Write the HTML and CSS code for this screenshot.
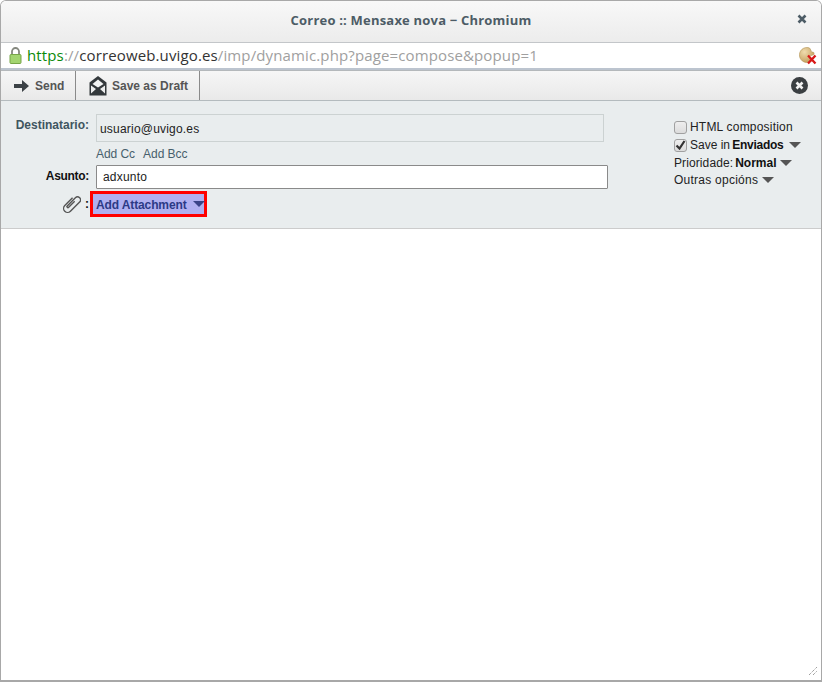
FILE: index.html
```html
<!DOCTYPE html>
<html lang="gl">
<head>
<meta charset="utf-8">
<title>Correo :: Mensaxe nova - Chromium</title>
<link rel="stylesheet" href="styles.css">
</head>
<body>
<div class="window">
  <header class="titlebar">
    <span class="title">Correo :: Mensaxe nova − Chromium</span>
    <svg class="win-close" width="10" height="10" viewBox="0 0 10 10"><path d="M1.500 1.500l7 7M8.500 1.500l-7 7" stroke="#4d5c66" stroke-width="2.600"/></svg>
  </header>
  <div class="urlbar">
    <svg class="lock" width="13" height="17" viewBox="0 0 13 17">
      <path d="M3 8V4.500a3.500 3.500 0 0 1 7 0V8" fill="none" stroke="#85887f" stroke-width="1.800"/>
      <rect x="1" y="7.500" width="11" height="9" rx="1" fill="#a2d470" stroke="#77a548"/>
    </svg>
    <span class="url"><span class="scheme">https</span><span class="dim">://</span><span class="host">correoweb.uvigo.es</span><span class="dim">/imp/dynamic.php?page=compose&amp;popup=1</span></span>
    <svg class="cookie" width="18" height="18" viewBox="0 0 18 18">
      <defs><radialGradient id="cookieFill" cx=".35" cy=".3" r=".8"><stop offset="0" stop-color="#f0dcae"/><stop offset="1" stop-color="#c09a58"/></radialGradient></defs>
      <path d="M8 .5A7.500 7.500 0 1 0 13.500 13L10 10c1-1.500 3-1.500 5-2.500.3-1-.2-2-.8-2.500-1 .3-2 0-2.200-1.500C11.500 2.500 11 1.500 10.500 1 9.700.6 8.800.5 8 .5z" fill="url(#cookieFill)" stroke="#b49658" stroke-width=".6"/>
      <path d="M9 8.500l7.500 8M16.500 8.500l-7.500 8" stroke="#d81818" stroke-width="2.300"/>
    </svg>
  </div>
  <nav class="toolbar">
    <button class="tool tool-send" type="button">
      <svg width="15" height="12" viewBox="0 0 15 12"><path d="M0 4h8V0l7 6-7 6V8H0z" fill="#3c4246"/></svg>
      <span>Send</span>
    </button>
    <button class="tool tool-draft" type="button">
      <svg width="18" height="20" viewBox="0 0 18 20"><path d="M9 0l8.500 6.500V19.500H.5V6.500z" fill="#33383b"/><path d="M9 3.500L3.500 8 9 11.500 14.500 8z" fill="#f3f4f4"/><path d="M2 9.500L7 13l-5 4.500zM16 9.500L11 13l5 4.500z" fill="#eceded"/></svg>
      <span>Save as Draft</span>
    </button>
    <svg class="tool-close" width="17" height="17" viewBox="0 0 17 17"><circle cx="8.500" cy="8.500" r="8.500" fill="#3b3f42"/><path d="M5.500 5.500l6 6M11.500 5.500l-6 6" stroke="#f2f2f2" stroke-width="2.600"/></svg>
  </nav>
  <section class="compose">
    <div class="fields">
      <label class="label label-to">Destinatario:</label>
      <div class="to-box">usuario@uvigo.es</div>
      <div class="add-links"><a>Add Cc</a><a>Add Bcc</a></div>
      <label class="label label-subject">Asunto:</label>
      <div class="subject-box">adxunto</div>
      <div class="label label-attach">
        <svg width="19" height="19" viewBox="0 0 19 19"><g transform="translate(9.500 9.500) rotate(45) scale(1) translate(-4 -10.500)"><path d="M0 5V16a4 4 0 0 0 8 0V3a3 3 0 0 0-6 0V14.500a1 1 0 0 0 2 0V6" fill="none" stroke="#555" stroke-width="1.400"/></g></svg>
        <b>:</b>
      </div>
      <button class="attach" type="button">Add Attachment<i class="caret caret-blue"></i></button>
    </div>
    <aside class="options">
      <div class="opt"><span class="check"></span>HTML composition</div>
      <div class="opt opt-save"><span class="check"><svg width="11" height="10" viewBox="0 0 11 10"><path d="M1.500 5.500l3 3L9.500 1" fill="none" stroke="#333" stroke-width="2.200"/></svg></span>Save in <b class="tight save-target">Enviados</b><i class="caret caret-send"></i></div>
      <div class="opt">Prioridade:<b class="normal">Normal</b><i class="caret caret-pri"></i></div>
      <div class="opt opt-more">Outras opcións<i class="caret caret-out"></i></div>
    </aside>
  </section>
  <main class="editor">
    <svg class="grip" width="9" height="9" viewBox="0 0 9 9"><path d="M0 8L8 0M4 8L8 4" stroke="#777" stroke-width="1" stroke-dasharray="1 1"/></svg>
  </main>
</div>
</body>
</html>
```
FILE: styles.css
```css
* { box-sizing: border-box; }
html, body { margin: 0; height: 100%; background: #fff; }
body { font-family: "Liberation Sans", Arial, sans-serif; font-size: 12px; color: #222; }
.window {
  width: 822px; height: 682px; display: flex; flex-direction: column;
  border: 1px solid #a8a8a8; border-bottom-width: 2px;
  border-radius: 6px 6px 0 0; overflow: hidden;
}
.titlebar {
  height: 41px; flex: none; display: flex; align-items: center; justify-content: center;
  position: relative; background: linear-gradient(#f8f8f8, #ececec);
}
.title {
  font-family: "Open Sans", sans-serif; font-weight: 700; font-size: 13px;
  letter-spacing: .2px; color: #4d5c66; margin-top: -4px;
}
.win-close { position: absolute; right: 14px; top: 13px; }
.urlbar {
  height: 28px; flex: none; display: flex; align-items: center; background: #fff;
  border-top: 1px solid #c3c6c9; border-bottom: 2px solid #bcc4cf; padding: 0 4px 2px 8px;
}
.lock { flex: none; margin-top: 2px; }
.url {
  font-family: "Open Sans", sans-serif; font-size: 15px; margin-left: 5px; flex: 1;
  white-space: nowrap; letter-spacing: .13px;
}
.scheme { color: #0a8a0a; }
.dim { color: #a0a0a0; }
.host { color: #333; }
.cookie { flex: none; margin-top: 2px; }
.toolbar {
  height: 31px; flex: none; display: flex; align-items: stretch; position: relative;
  background: linear-gradient(#f6f6f6, #e9e9e9);
  border-top: 1px solid #b4b8bb; border-bottom: 1px solid #b4bbbe;
}
.tool {
  font: bold 12px "Liberation Sans", Arial, sans-serif; color: #555;
  background: none; border: 0; border-right: 1px solid #8a8a8a; padding: 0;
  display: flex; align-items: center;
}
.tool-send { width: 75px; padding-left: 13px; gap: 6px; }
.tool-draft { width: 124px; padding-left: 13px; gap: 5px; }
.tool-close { position: absolute; right: 13px; top: 6px; }
.compose {
  height: 128px; flex: none; display: flex; background: #e9edee;
  border-bottom: 1px solid #ccc; padding-top: 13px;
}
.fields {
  width: 607px; flex: none; display: grid;
  grid-template-columns: 88px 512px; column-gap: 7px; align-content: start;
}
.label { font-weight: bold; text-align: right; }
.label-to { color: #3f5560; padding-top: 4px; }
.to-box {
  height: 28px; width: 508px; background: #e9edee; border: 1px solid #ccd2d2;
  padding: 7px 0 0 3px; letter-spacing: .2px; color: #222;
}
.add-links {
  grid-column: 2; height: 23px; padding-top: 5px; display: flex; gap: 8px;
  color: #47606c; font-size: 12px; letter-spacing: -.05px;
}
.label-subject { color: #111; padding-top: 4px; letter-spacing: -.3px; }
.subject-box {
  height: 24px; background: #fff; border: 1px solid #8a8a8a; border-radius: 1px;
  padding: 4px 0 0 6px; letter-spacing: .2px; color: #222;
}
.label-attach {
  display: flex; justify-content: flex-end; align-items: center; gap: 4px; margin-top: 2px;
  color: #111; height: 26px;
}
.attach {
  width: 117px; height: 26px; margin: 2px 0 0 -6px; padding: 2px 0 0 3px;
  display: flex; align-items: center; background: #b0b0f0; border: 3px solid #f00;
  font: bold 12px "Liberation Sans", Arial, sans-serif; color: #2c3a86; text-align: left;
  white-space: nowrap; letter-spacing: -.12px;
}
.options { margin-left: 66px; padding-top: 4px; color: #222; letter-spacing: .2px; }
.opt { height: 18px; display: flex; align-items: center; white-space: pre; }
.opt.opt-save { letter-spacing: 0; }
.opt:nth-child(3), .opt:nth-child(4) { height: 17px; letter-spacing: .1px; }
.opt.opt-more { letter-spacing: .25px; }
.check {
  width: 13px; height: 13px; margin-right: 3px; background: linear-gradient(#eee, #dcdcdc); flex: none;
  border: 1px solid #a0a0a0; border-radius: 3px; display: flex; align-items: center; justify-content: center;
}
b { font-weight: bold; color: #111; }
.tight { letter-spacing: -.3px; }
.save-target { margin-left: -1px; }
.normal { letter-spacing: 0; margin-left: 2px; }
.caret {
  display: inline-block; width: 0; height: 0; flex: none;
  border-left: 6px solid transparent; border-right: 6px solid transparent;
  border-top: 6px solid #555;
}
.caret-blue { margin-left: 6px; border-top-color: #3a4488; margin-top: -2px; }
.caret-send { margin-left: 6px; }
.caret-pri { margin-left: 4px; }
.caret-out { margin-left: 4px; }
.editor { flex: 1; background: #fff; position: relative; }
.grip { position: absolute; right: 3px; bottom: 4px; }
```
